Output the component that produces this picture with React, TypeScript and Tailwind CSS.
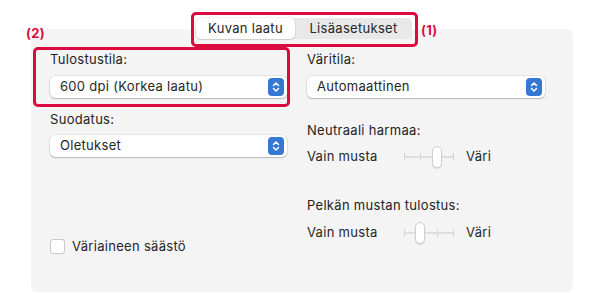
import React from "react";

const font = { fontFamily: "Inter, 'Noto Sans', sans-serif", letterSpacing: "0.3px" };

function Stepper() {
  return (
    <div className="flex h-[18px] w-[16px] items-center justify-center rounded-[4px] bg-[#3478d4]">
      <svg width="8" height="12" viewBox="0 0 8 12" fill="none" stroke="white" strokeWidth="1.5" strokeLinecap="round" strokeLinejoin="round">
        <path d="M1.5 4.5 L4 2 L6.5 4.5" />
        <path d="M1.5 7.5 L4 10 L6.5 7.5" />
      </svg>
    </div>
  );
}

function Select({ value }: { value: string }) {
  return (
    <div className="flex h-[22px] w-full items-center justify-between rounded-[5px] bg-white pl-[10px] pr-[3px] text-[13px] text-[#262626] shadow-[0_0_0_0.5px_rgba(0,0,0,0.12),0_1px_1.5px_rgba(0,0,0,0.2)]">
      <span>{value}</span>
      <Stepper />
    </div>
  );
}

function Slider({ pos }: { pos: number }) {
  const ticks = [0, 1, 2, 3];
  return (
    <div className="relative h-[22px] w-[50px]">
      <div className="absolute left-0 right-0 top-[10px] h-[2px] bg-[#dedede]" />
      {ticks.map((t) => (
        <div
          key={t}
          className="absolute top-[7px] h-[8px] w-[1px] bg-[#d4d4d4]"
          style={{ left: `${(t * 49) / 3}px` }}
        />
      ))}
      <div
        className="absolute top-0 h-[22px] w-[10px] rounded-full border border-[#cfcfcf] bg-white shadow-[0_1px_1px_rgba(0,0,0,0.12)]"
        style={{ left: `${(pos * 49) / 3 - 5}px` }}
      />
    </div>
  );
}

export default function App() {
  return (
    <div className="relative h-[293px] w-[602px] overflow-hidden bg-white" style={font}>
      <div className="ml-[31px] mt-[29px] h-[263px] w-[542px] rounded-[6px] bg-[#f4f4f4]">
        <div className="flex pl-[19px] pr-[28px] pt-[22px]">
          {/* left column */}
          <div className="flex w-[237px] flex-col">
            <div className="h-[16px] text-[13px] leading-[16px] text-[#222]">Tulostustila:</div>
            <div className="mt-[9px]">
              <Select value="600 dpi (Korkea laatu)" />
            </div>
            <div className="mt-[13px] h-[16px] text-[13px] leading-[16px] text-[#222]">Suodatus:</div>
            <div className="mt-[8px]">
              <Select value="Oletukset" />
            </div>
            <div className="mt-[80px] flex items-center gap-[7px]">
              <div className="h-[15px] w-[15px] rounded-[3px] border border-[#c8c8c8] bg-white" />
              <span className="text-[13px] text-[#262626]">Väriaineen säästö</span>
            </div>
          </div>
          {/* right column */}
          <div className="ml-[20px] flex w-[238px] flex-col">
            <div className="h-[16px] text-[13px] leading-[16px] text-[#222]">Väritila:</div>
            <div className="mt-[9px]">
              <Select value="Automaattinen" />
            </div>
            <div className="mt-[24px] h-[16px] text-[13px] leading-[16px] text-[#222]">Neutraali harmaa:</div>
            <div className="mt-[8px] flex h-[22px] items-center text-[13px] text-[#262626]">
              <span className="w-[97px]">Vain musta</span>
              <Slider pos={2} />
              <span className="ml-[12px]">Väri</span>
            </div>
            <div className="mt-[29px] h-[16px] text-[13px] leading-[16px] text-[#222]">Pelkän mustan tulostus:</div>
            <div className="mt-[9px] flex h-[22px] items-center text-[13px] text-[#262626]">
              <span className="w-[97px]">Vain musta</span>
              <Slider pos={1} />
              <span className="ml-[12px]">Väri</span>
            </div>
          </div>
        </div>
      </div>

      {/* segmented tab control overlapping panel top */}
      <div className="absolute left-[196px] top-[18px] flex h-[21px] w-[216px] rounded-[5px] bg-[#e8e8e8] text-[13px] text-[#262626]">
        <div className="flex w-[99px] items-center justify-center rounded-[5px] bg-white shadow-[0_0_0_0.5px_rgba(0,0,0,0.1),0_1px_1px_rgba(0,0,0,0.12)]">
          Kuvan laatu
        </div>
        <div className="flex flex-1 items-center justify-center">Lisäasetukset</div>
      </div>

      {/* annotations */}
      <div className="absolute left-[191px] top-[12px] h-[35px] w-[227px] rounded-[5px] border-[3px] border-[#dc0b3f]" />
      <div className="absolute left-[421px] top-[21px] text-[13px] font-bold text-[#dc0b3f]">(1)</div>
      <div className="absolute left-[33px] top-[47px] h-[60px] w-[257px] rounded-[5px] border-[3px] border-[#dc0b3f]" />
      <div className="absolute left-[26px] top-[24px] text-[13px] font-bold text-[#dc0b3f]">(2)</div>
    </div>
  );
}
